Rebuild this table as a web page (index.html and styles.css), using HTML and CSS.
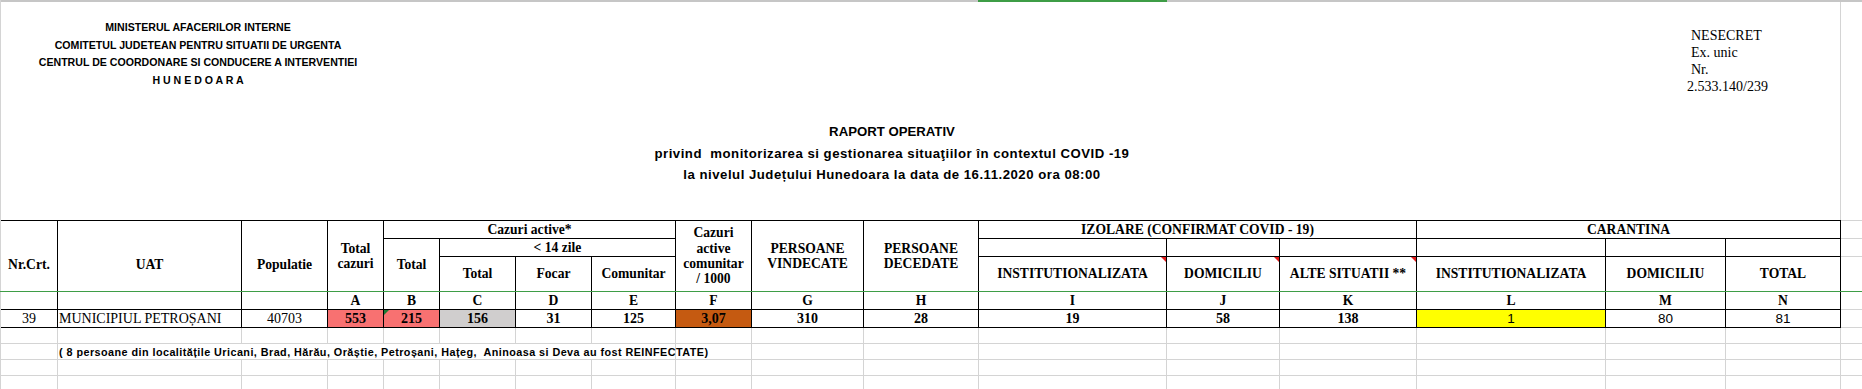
FILE: index.html
```html
<!DOCTYPE html>
<html lang="ro">
<head>
<meta charset="utf-8">
<title>Raport operativ</title>
<link rel="stylesheet" href="styles.css">
</head>
<body>
<div class="sheet">
  <div class="colbar"><span class="colsel"></span></div>
  <div class="top">
    <div class="top-main">
      <div class="letterhead">
        <div class="org">
          <p>MINISTERUL AFACERILOR INTERNE</p>
          <p>COMITETUL JUDETEAN PENTRU SITUATII DE URGENTA</p>
          <p>CENTRUL DE COORDONARE SI CONDUCERE A INTERVENTIEI</p>
          <p>H U N E D O A R A</p>
        </div>
        <div class="classif">
          <p>NESECRET</p>
          <p>Ex. unic</p>
          <p>Nr.</p>
          <p class="nr">2.533.140/239</p>
        </div>
      </div>
      <div class="title">
        <p>RAPORT OPERATIV</p>
        <p class="sub">privind&nbsp; monitorizarea si gestionarea situaţiilor în contextul COVID -19</p>
        <p class="sub">la nivelul Județului Hunedoara la data de 16.11.2020 ora 08:00</p>
      </div>
    </div>
    <div class="top-extra"></div>
  </div>

  <div class="grid">
    <!-- row 1 -->
    <div class="t h r1 rs4">Nr.Crt.</div>
    <div class="t h r1 rs4">UAT</div>
    <div class="t h r1 rs4">Populatie</div>
    <div class="t h r1 rs3">Total<br>cazuri</div>
    <div class="t h r1 cs4">Cazuri active*</div>
    <div class="t h r1 rs3">Cazuri<br>active<br>comunitar<br>/ 1000</div>
    <div class="t h r1 rs3">PERSOANE<br>VINDECATE</div>
    <div class="t h r1 rs3">PERSOANE<br>DECEDATE</div>
    <div class="t h r1 cs3">IZOLARE (CONFIRMAT COVID - 19)</div>
    <div class="t h r1 cs3">CARANTINA</div>
    <div class="x r1x"></div>
    <!-- row 2 -->
    <div class="t h rs2">Total</div>
    <div class="t h cs3">&lt; 14 zile</div>
    <div class="t"></div>
    <div class="t"></div>
    <div class="t"></div>
    <div class="t"></div>
    <div class="t"></div>
    <div class="t"></div>
    <div class="x"></div>
    <!-- row 3 -->
    <div class="t h">Total</div>
    <div class="t h">Focar</div>
    <div class="t h">Comunitar</div>
    <div class="t h note">INSTITUTIONALIZATA</div>
    <div class="t h note">DOMICILIU</div>
    <div class="t h note">ALTE SITUATII **</div>
    <div class="t h">INSTITUTIONALIZATA</div>
    <div class="t h">DOMICILIU</div>
    <div class="t h">TOTAL</div>
    <div class="x"></div>
    <!-- row 4: column letters -->
    <div class="t h">A</div>
    <div class="t h">B</div>
    <div class="t h">C</div>
    <div class="t h">D</div>
    <div class="t h">E</div>
    <div class="t h">F</div>
    <div class="t h">G</div>
    <div class="t h">H</div>
    <div class="t h">I</div>
    <div class="t h">J</div>
    <div class="t h">K</div>
    <div class="t h">L</div>
    <div class="t h">M</div>
    <div class="t h">N</div>
    <div class="x"></div>
    <!-- row 5: data -->
    <div class="t d">39</div>
    <div class="t d left">MUNICIPIUL PETROȘANI</div>
    <div class="t d">40703</div>
    <div class="t d b red">553</div>
    <div class="t d b red flag">215</div>
    <div class="t d b grey">156</div>
    <div class="t d b">31</div>
    <div class="t d b">125</div>
    <div class="t d b rust">3,07</div>
    <div class="t d b">310</div>
    <div class="t d b">28</div>
    <div class="t d b">19</div>
    <div class="t d b">58</div>
    <div class="t d b">138</div>
    <div class="t d s yellow">1</div>
    <div class="t d s">80</div>
    <div class="t d s">81</div>
    <div class="x"></div>
    <!-- row 6 -->
    <div class="g"></div><div class="g"></div><div class="g"></div><div class="g"></div><div class="g"></div><div class="g"></div>
    <div class="g"></div><div class="g"></div><div class="g"></div><div class="g"></div><div class="g"></div><div class="g"></div>
    <div class="g"></div><div class="g"></div><div class="g"></div><div class="g"></div><div class="g"></div><div class="g end"></div>
    <!-- row 7: footnote -->
    <div class="g"></div>
    <div class="g cs7 foot">( 8 persoane din localitățile Uricani, Brad, Hărău, Orăștie, Petroșani, Hațeg,&nbsp; Aninoasa si Deva au fost REINFECTATE)</div>
    <div class="g"></div><div class="g"></div><div class="g"></div><div class="g"></div><div class="g"></div>
    <div class="g"></div><div class="g"></div><div class="g"></div><div class="g"></div><div class="g end"></div>
    <!-- row 8 -->
    <div class="g"></div><div class="g"></div><div class="g"></div><div class="g"></div><div class="g"></div><div class="g"></div>
    <div class="g"></div><div class="g"></div><div class="g"></div><div class="g"></div><div class="g"></div><div class="g"></div>
    <div class="g"></div><div class="g"></div><div class="g"></div><div class="g"></div><div class="g"></div><div class="g end"></div>
    <!-- row 9 -->
    <div class="g"></div><div class="g"></div><div class="g"></div><div class="g"></div><div class="g"></div><div class="g"></div>
    <div class="g"></div><div class="g"></div><div class="g"></div><div class="g"></div><div class="g"></div><div class="g"></div>
    <div class="g"></div><div class="g"></div><div class="g"></div><div class="g"></div><div class="g"></div><div class="g end"></div>

    <div class="freeze"></div>
  </div>
</div>
</body>
</html>
```

FILE: styles.css
```css
* {
  box-sizing: border-box;
  margin: 0;
  padding: 0;
}

html, body {
  width: 1862px;
  height: 389px;
  overflow: hidden;
  background: #fff;
}

body {
  font-family: "Liberation Serif", "Times New Roman", serif;
  color: #000;
}

.sheet {
  height: 389px;
  border-left: 1px solid #d4d4d4;
}

/* bottom edge of the spreadsheet column headers */
.colbar {
  display: flex;
  height: 2px;
  background: #c6c6c6;
}

.colsel {
  margin-left: 977px;
  width: 189px;
  background: #3e9d46;
}

.top {
  display: flex;
  height: 218px;
}

.top-main {
  width: 1840px;
  border-right: 1px solid #d4d4d4;
}

.top-extra {
  flex: 1;
}

.letterhead {
  display: flex;
  justify-content: space-between;
  height: 96px;
}

.org {
  width: 394px;
  padding-top: 17px;
  font-family: "Liberation Sans", Arial, sans-serif;
  font-weight: bold;
  font-size: 10.6px;
  line-height: 17.7px;
  text-align: center;
}

.classif {
  width: 149px;
  padding-top: 25px;
  font-size: 14px;
  line-height: 17px;
}

.classif .nr {
  margin-left: -4px;
}

.title {
  width: 1782px;
  padding-top: 23px;
  font-family: "Liberation Sans", Arial, sans-serif;
  font-weight: bold;
  font-size: 13.2px;
  line-height: 21.5px;
  text-align: center;
}

.title .sub {
  letter-spacing: 0.5px;
}

/* the sheet grid */
.grid {
  position: relative;
  display: grid;
  grid-template-columns: 57px 184px 86px 56px 56px 76px 76px 84px 76px 112px 115px 188px 113px 137px 189px 120px 115px 21px;
  grid-template-rows: 19px 18px 35px 18px 18px 16px 16px 16px 14px;
}

.t {
  position: relative;
  border-right: 1px solid #000;
  border-bottom: 1px solid #000;
}

.r1 {
  border-top: 1px solid #000;
}

.x {
  border-bottom: 1px solid #d4d4d4;
}

.r1x {
  border-top: 1px solid #d4d4d4;
}

.g {
  border-right: 1px solid #d4d4d4;
  border-bottom: 1px solid #d4d4d4;
}

.g.end {
  border-right: 0;
}

.rs2 { grid-row: span 2; }
.rs3 { grid-row: span 3; }
.rs4 { grid-row: span 4; }
.cs3 { grid-column: span 3; }
.cs4 { grid-column: span 4; }
.cs7 { grid-column: span 7; }

.h {
  display: flex;
  align-items: center;
  justify-content: center;
  text-align: center;
  font-weight: bold;
  font-size: 13.6px;
  line-height: 15.3px;
}

.d {
  display: flex;
  align-items: center;
  justify-content: center;
  font-size: 14px;
  line-height: 15px;
}

.d.left {
  justify-content: flex-start;
  padding-left: 1px;
}

.b {
  font-weight: bold;
}

.s {
  font-family: "Liberation Sans", Arial, sans-serif;
  font-size: 13.5px;
}

.red { background: #f87171; }
.grey { background: #d0cece; }
.rust { background: #c55a11; }
.yellow { background: #ffff00; }

/* comment indicators */
.note::after {
  content: "";
  position: absolute;
  top: 0;
  right: 0;
  border-left: 5px solid transparent;
  border-top: 5px solid #e21b1b;
}

/* error indicator */
.flag::before {
  content: "";
  position: absolute;
  top: 0;
  left: 0;
  border-right: 5px solid transparent;
  border-top: 5px solid #1e7b34;
}

.foot {
  display: flex;
  align-items: center;
  padding-left: 1px;
  white-space: nowrap;
  font-family: "Liberation Sans", Arial, sans-serif;
  font-weight: bold;
  font-size: 10.8px;
  letter-spacing: 0.45px;
}

/* frozen pane divider */
.freeze {
  position: absolute;
  left: -1px;
  right: 0;
  top: 71px;
  height: 1px;
  background: #3e9d46;
}
```
